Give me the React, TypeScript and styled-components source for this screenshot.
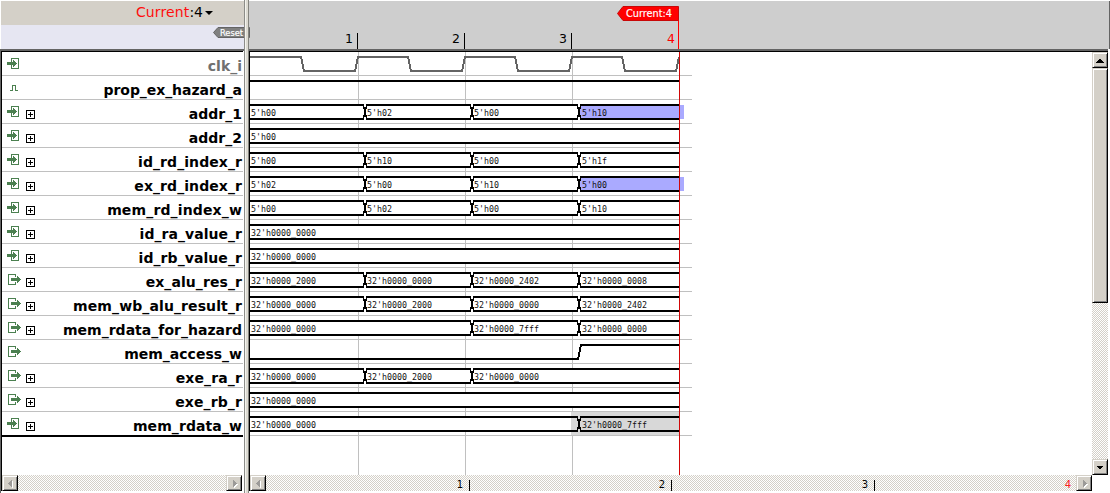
import React from "react";
import styled, { createGlobalStyle, css } from "styled-components";

const GlobalStyle = createGlobalStyle`
  html, body { margin: 0; background: #fff; overflow: hidden; }
  * { box-sizing: border-box; }
`;

const SANS = '"DejaVu Sans", sans-serif';
const MONO = '"DejaVu Sans Mono", monospace';
const PERIOD = 107;
const START = 250;
const END = 679;

type Direction = "in" | "out" | "pulse";
type Segment = { from: number; value: string; mark?: "blue" | "gray" };
type Signal = {
  name: string;
  dir: Direction;
  /** Extra width of the whole label, in pixels, spread over its letters. */
  stretch?: number;
  dim?: boolean;
  bus?: Segment[];
  line?: "clock" | "high" | "rise";
};

const EDGES = [START, 365, 472, 579];
const bus = (...values: (string | null)[]): Segment[] =>
  values.flatMap((value, i) => (value === null ? [] : [{ from: EDGES[i], value }]));
const marked = (segments: Segment[], mark: "blue" | "gray"): Segment[] =>
  segments.map((s, i) => (i === segments.length - 1 ? { ...s, mark } : s));

const SIGNALS: Signal[] = [
  { name: "clk_i", dir: "in", dim: true, line: "clock" },
  { name: "prop_ex_hazard_a", dir: "pulse", stretch: -1, line: "high" },
  { name: "addr_1", dir: "in", bus: marked(bus("5'h00", "5'h02", "5'h00", "5'h10"), "blue") },
  { name: "addr_2", dir: "in", bus: bus("5'h00") },
  { name: "id_rd_index_r", dir: "in", stretch: 1, bus: bus("5'h00", "5'h10", "5'h00", "5'h1f") },
  { name: "ex_rd_index_r", dir: "in", stretch: 1, bus: marked(bus("5'h02", "5'h00", "5'h10", "5'h00"), "blue") },
  { name: "mem_rd_index_w", dir: "in", stretch: 2, bus: bus("5'h00", "5'h02", "5'h00", "5'h10") },
  { name: "id_ra_value_r", dir: "in", stretch: 0.5, bus: bus("32'h0000_0000") },
  { name: "id_rb_value_r", dir: "in", stretch: 1, bus: bus("32'h0000_0000") },
  { name: "ex_alu_res_r", dir: "out", stretch: 1, bus: bus("32'h0000_2000", "32'h0000_0000", "32'h0000_2402", "32'h0000_0008") },
  { name: "mem_wb_alu_result_r", dir: "out", stretch: 2, bus: bus("32'h0000_0000", "32'h0000_2000", "32'h0000_0000", "32'h0000_2402") },
  { name: "mem_rdata_for_hazard", dir: "out", stretch: 0.3, bus: bus("32'h0000_0000", null, "32'h0000_7fff", "32'h0000_0000") },
  { name: "mem_access_w", dir: "out", line: "rise" },
  { name: "exe_ra_r", dir: "out", stretch: 1, bus: bus("32'h0000_0000", "32'h0000_2000", "32'h0000_0000") },
  { name: "exe_rb_r", dir: "out", stretch: 1, bus: bus("32'h0000_0000") },
  { name: "mem_rdata_w", dir: "in", stretch: 1, bus: marked(bus("32'h0000_0000", null, null, "32'h0000_7fff"), "gray") },
];

const Window = styled.div`
  display: grid;
  grid-template-columns: 244px 5px 861px;
  width: 1110px;
  height: 493px;
  background: #fff;
  font-family: ${SANS};
`;

const NamePanel = styled.section`
  display: flex;
  flex-direction: column;
  padding-top: 1px;
`;

const TimeSelector = styled.header`
  display: flex;
  justify-content: flex-end;
  align-items: center;
  height: 24px;
  margin-left: 1px;
  padding: 0 31px 1px 0;
  background: #d4d0c8;
  font-size: 14px;
  line-height: 23px;
  color: #000;
`;

const RedText = styled.span`
  color: #ff0d0d;
  letter-spacing: 0.12px;
`;

const Caret = styled.i`
  width: 0;
  height: 0;
  margin: 1px 0 0 2px;
  border: 4px solid transparent;
  border-top-color: #000;
  border-bottom: 0;
`;

const ResetStrip = styled.div`
  display: flex;
  justify-content: flex-end;
  align-items: flex-start;
  height: 24px;
  margin-left: 1px;
  padding-top: 2px;
  background: #e6e6f2;
`;

const ResetFlag = styled.svg`
  position: relative;
  display: block;
  flex: none;
  width: 37px;
  height: 12px;
  margin-right: -6px;
`;

const NameBody = styled.div`
  flex: 1;
  display: flex;
  flex-direction: column;
  border-top: 2px solid #646464;
  border-left: 1px solid #646464;
  padding-bottom: 2px;
`;

const NameInner = styled.div`
  flex: 1;
  display: flex;
  flex-direction: column;
  margin-right: 1px;
  border-top: 1px solid #000;
  border-left: 1px solid #000;
`;

const NameRow = styled.div<{ $last: boolean }>`
  display: grid;
  grid-template-columns: 24px 14px 1fr;
  height: ${(p) => (p.$last ? 25 : 24)}px;
  border-bottom: ${(p) => (p.$last ? "2px solid #000" : "1px solid #c0c0c0")};
`;

const NameLabel = styled.span<{ $dim?: boolean; $tracking: number }>`
  text-align: right;
  padding-right: 1px;
  font-size: 14px;
  font-weight: bold;
  letter-spacing: ${(p) => p.$tracking.toFixed(3)}px;
  line-height: 28px;
  height: 23px;
  color: ${(p) => (p.$dim ? "#707070" : "#000")};
  white-space: nowrap;
`;

const Glyph = styled.svg`
  display: block;
  height: 23px;
  overflow: visible;
`;

const Spacer = styled.div`
  flex: 1;
`;

const Splitter = styled.div`
  position: relative;
  z-index: 2;
  background: linear-gradient(to right, #8c8c88 1px, #f4f4ee 1px 2px, #dcdad2 2px 4px, #84847e 4px);
`;

const WavePanel = styled.section`
  display: flex;
  flex-direction: column;
  padding-top: 1px;
`;

const Ruler = styled.header`
  display: flex;
  align-items: flex-end;
  height: 48px;
  border-right: 1px solid #646464;
  background: #cecece;
`;

const RulerTick = styled.div<{ $first?: boolean; $current?: boolean }>`
  position: relative;
  width: ${(p) => (p.$first ? PERIOD + 2 : PERIOD)}px;
  height: 16px;
  padding-right: ${(p) => (p.$current ? 3 : 4)}px;
  border-right: 1px solid ${(p) => (p.$current ? "#ff0000" : "#000")};
  text-align: right;
  font-size: 12.5px;
  line-height: 12px;
  color: ${(p) => (p.$current ? "#ff0000" : "#000")};
`;

const CurrentFlag = styled.svg`
  position: absolute;
  right: -1px;
  bottom: 0;
  width: 62px;
  height: 43px;
`;

const WaveMain = styled.div`
  display: grid;
  grid-template-columns: 843px 16px;
  width: 859px;
  height: 442px;
  border-top: 2px solid #646464;
`;

const WaveColumn = styled.div`
  display: flex;
  flex-direction: column;
  border-top: 1px solid #000;
  border-left: 1px solid #000;
`;

const gridLine = css`linear-gradient(#c0c0c0, #c0c0c0)`;

const Waves = styled.div`
  position: relative;
  height: 423px;
  background-image: ${gridLine}, ${gridLine}, ${gridLine};
  background-repeat: no-repeat;
  background-size: 1px 100%;
  background-position: 108px 0, 215px 0, 322px 0;
`;

const Cursor = styled.div`
  position: absolute;
  left: 429px;
  top: 0;
  bottom: 0;
  width: 1px;
  background: #d00808;
`;

const WaveRow = styled.svg`
  display: block;
  width: 442px;
  height: 24px;
`;

const dither = css`
  background: repeating-conic-gradient(#d4d0c8 0 25%, #fff 0 50%) 0 0 / 2px 2px;
`;

const HScroll = styled.div<{ $inset?: boolean }>`
  display: flex;
  height: 16px;
  margin-right: ${(p) => (p.$inset ? 1 : 0)}px;
  ${dither}
`;

const ScrollTicks = styled.div`
  flex: 1;
  display: flex;
  align-items: flex-end;
`;

const ScrollTick = styled.div<{ $width: number; $current?: boolean }>`
  flex: none;
  width: ${(p) => p.$width}px;
  height: 11px;
  padding-right: ${(p) => (p.$current ? 5 : 6)}px;
  border-right: ${(p) => (p.$current ? 0 : 1)}px solid #000;
  text-align: right;
  font-size: 10px;
  line-height: 10px;
  color: ${(p) => (p.$current ? "#ff2020" : "#000")};
`;

const VScroll = styled.div`
  display: flex;
  flex-direction: column;
  height: 424px;
  border-top: 1px solid #000;
  ${dither}
`;

const ScrollButton = styled.div`
  flex: none;
  display: flex;
  align-items: center;
  justify-content: center;
  width: 16px;
  height: 16px;
  background: #d4d0c8;
  border: 1px solid #d4d0c8;
  border-right-color: #000;
  border-bottom-color: #000;
  box-shadow: inset 1px 1px #fff, inset -1px -1px #808080;
`;

const ScrollThumb = styled(ScrollButton)`
  height: 235px;
`;

const GREEN = "#4b8050";

function DirectionIcon({ dir }: { dir: Direction }) {
  return (
    <Glyph width="24" viewBox="2 0 24 23" shapeRendering="crispEdges">
      {dir === "in" && (
        <>
          <path d="M11.5 10V6.5H18.5V16.5H11.5V13" fill="none" stroke={GREEN} />
          <path d="M7 10H13V8H14V9H15V10H16V11H17V12H16V13H15V14H14V15H13V13H7Z" fill={GREEN} />
        </>
      )}
      {dir === "out" && (
        <>
          <path d="M15.5 9V6.5H8.5V16.5H15.5V14" fill="none" stroke={GREEN} />
          <path d="M11 10H17V8H18V9H19V10H20V11H21V12H20V13H19V14H18V15H17V13H11Z" fill={GREEN} />
        </>
      )}
      {dir === "pulse" && <path d="M10 14.5H12.5V9.5H15.5V14.5H18" fill="none" stroke={GREEN} />}
    </Glyph>
  );
}

function ExpandBox() {
  return (
    <Glyph width="14" viewBox="26 0 14 23" shapeRendering="crispEdges">
      <path d="M26.5 10.5H34.5V18.5H26.5ZM28 14.5H33M30.5 12V17" fill="none" stroke="#000" />
    </Glyph>
  );
}

function linePath(kind: Signal["line"]) {
  if (kind === "high") return `M${START} 5H${END}`;
  if (kind === "rise") return `M${START} 19H578L581 5H${END}`;
  let d = `M${START} 5`;
  for (let i = 0; i < 4; i++) {
    const x = 301 + i * PERIOD;
    d += `H${x}L${x + 3} 19H${x + 54}L${x + 57} 5`;
  }
  return d;
}

function BusSegment({ segment, end }: { segment: Segment; end: number }) {
  const { from, value, mark } = segment;
  const first = from === START;
  const last = end === END;
  const left = first ? from : from + 1;
  const right = last ? END : end - 1;
  const textX = first ? 251 : from === EDGES[3] ? from + 3 : from + 2;
  return (
    <g>
      {mark !== "gray" && (
        <rect x={left} y="5" width={(mark === "blue" ? 684 : right) - left} height="14" fill={mark === "blue" ? "#aaaaff" : "#fff"} />
      )}
      {mark === "gray" && <rect x="571" y="6" width="108" height="12" fill="#d8d8d8" />}
      <path d={`M${left} 5H${right}M${left} 19H${right}`} stroke="#000" strokeWidth="2" />
      {!first && (
        <path d={`M${from + 1.5} 4V9M${from + 0.5} 7V17M${from + 1.5} 15V20`} stroke="#000" strokeWidth="1" />
      )}
      {/* The closing edge is two pixels wide at its corners. */}
      <path
        d={last ? "" : `M${end - 1.5} 4V9M${end - 0.5} 7V17M${end - 1.5} 15V20`}
        stroke="#000"
        strokeWidth="1"
      />
      <text
        x={textX}
        y="16"
        fontFamily={MONO}
        fontSize="9.3"
        textLength={value.length * 5}
        lengthAdjust="spacingAndGlyphs"
        fill="#111"
      >
        {value}
      </text>
    </g>
  );
}

function Wave({ signal }: { signal: Signal }) {
  const segments = signal.bus ?? [];
  const selected = segments.some((s) => s.mark === "gray");
  return (
    <WaveRow viewBox={`${START} 0 442 24`} shapeRendering="crispEdges">
      {selected && <rect x="571" y="0" width="108" height="23" fill="#d8d8d8" />}
      <path d="M250 23.5H692" stroke="#c0c0c0" />
      {segments.map((s, i) => (
        <BusSegment key={s.from} segment={s} end={segments[i + 1]?.from ?? END} />
      ))}
      {selected && <path d="M577.5 4V9M578.5 7V17M577.5 15V20" stroke="#000" />}
      {signal.line && (
        <path d={linePath(signal.line)} fill="none" stroke={signal.dim ? "#646464" : "#000"} strokeWidth="2" />
      )}
    </WaveRow>
  );
}

const ARROWS = {
  left: "M9 3V12L5 7.5Z",
  right: "M6 3V12L10 7.5Z",
  up: "M3 9.5H11L7 5Z",
  down: "M3 5.5H11L7 10Z",
};

function ArrowButton({ to, disabled }: { to: keyof typeof ARROWS; disabled?: boolean }) {
  return (
    <ScrollButton>
      <svg width="14" height="14" shapeRendering="crispEdges">
        {disabled && <path d={ARROWS[to]} fill="#fff" transform="translate(1 1)" />}
        <path d={ARROWS[to]} fill={disabled ? "#9c9a98" : "#000"} />
      </svg>
    </ScrollButton>
  );
}

export default function App() {
  return (
    <>
      <GlobalStyle />
      <Window>
        <NamePanel>
          <TimeSelector>
            <RedText>Current</RedText>:4
            <Caret />
          </TimeSelector>
          <ResetStrip>
            <ResetFlag viewBox="0 0 37 12">
              <path d="M0.5 5.5L5 0.5H36.5V10.5H5Z" fill="#808080" stroke="#646464" />
              <text x="7" y="8.5" fontFamily={SANS} fontSize="8.5" textLength="23" lengthAdjust="spacingAndGlyphs" fill="#fff" stroke="#fff" strokeWidth="0.2">
                Reset
              </text>
            </ResetFlag>
          </ResetStrip>
          <NameBody>
            <NameInner>
              {SIGNALS.map((s, i) => (
                <NameRow key={s.name} $last={i === SIGNALS.length - 1}>
                  <DirectionIcon dir={s.dir} />
                  {s.bus ? <ExpandBox /> : <span />}
                  <NameLabel $dim={s.dim} $tracking={(s.stretch ?? 0) / s.name.length}>
                    {s.name}
                  </NameLabel>
                </NameRow>
              ))}
              <Spacer />
              <HScroll $inset>
                <ArrowButton to="left" disabled />
                <Spacer />
                <ArrowButton to="right" disabled />
              </HScroll>
            </NameInner>
          </NameBody>
        </NamePanel>
        <Splitter />
        <WavePanel>
          <Ruler>
            <RulerTick $first>1</RulerTick>
            <RulerTick>2</RulerTick>
            <RulerTick>3</RulerTick>
            <RulerTick $current>
              4
              <CurrentFlag viewBox="617 6 62 43">
                <path d="M678.5 7V49" stroke="#ff0000" />
                <path d="M617.5 13.5L623 6.5H678.5V20.5H623Z" fill="#ff0000" stroke="#c80808" />
                <text x="626" y="17" fontFamily={SANS} fontSize="10" textLength="46" lengthAdjust="spacingAndGlyphs" fill="#fff" stroke="#fff" strokeWidth="0.15">
                  Current:4
                </text>
              </CurrentFlag>
            </RulerTick>
          </Ruler>
          <WaveMain>
            <WaveColumn>
              <Waves>
                {SIGNALS.map((s) => (
                  <Wave key={s.name} signal={s} />
                ))}
                <Cursor />
              </Waves>
              <HScroll>
                <ArrowButton to="left" disabled />
                <ScrollTicks>
                  <ScrollTick $width={204}>1</ScrollTick>
                  <ScrollTick $width={202}>2</ScrollTick>
                  <ScrollTick $width={203}>3</ScrollTick>
                  <ScrollTick $width={201} $current>4</ScrollTick>
                </ScrollTicks>
                <ArrowButton to="right" disabled />
              </HScroll>
            </WaveColumn>
            <VScroll>
              <ArrowButton to="up" />
              <ScrollThumb />
              <Spacer />
              <ArrowButton to="down" />
            </VScroll>
          </WaveMain>
        </WavePanel>
      </Window>
    </>
  );
}
